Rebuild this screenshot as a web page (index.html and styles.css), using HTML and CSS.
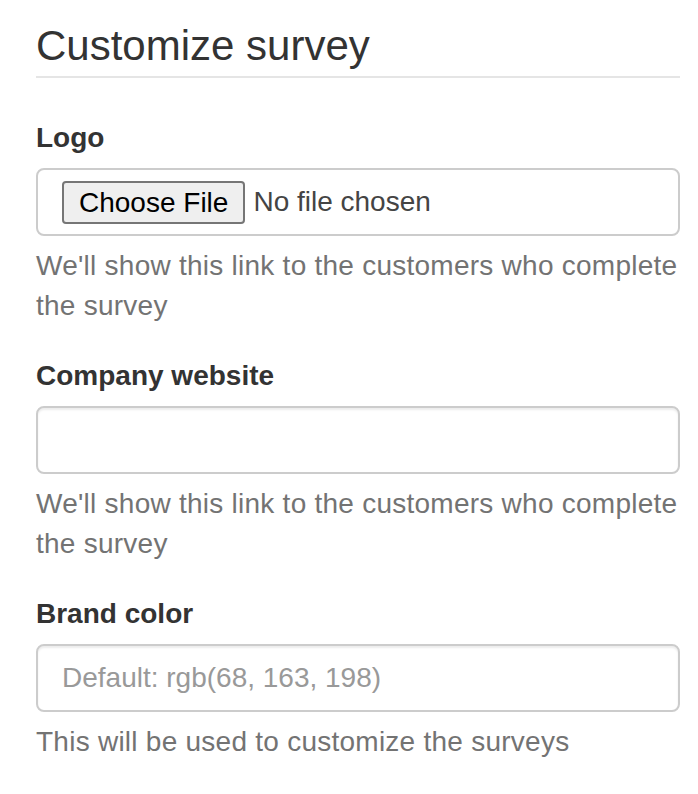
FILE: index.html
```html
<!DOCTYPE html>
<html lang="en">
<head>
<meta charset="utf-8">
<title>Customize survey</title>
<link rel="stylesheet" href="styles.css">
</head>
<body>
<form class="page">
  <fieldset class="fieldset">
    <legend class="legend">Customize survey</legend>
    <div class="form-group">
      <label class="label">Logo</label>
      <div class="form-control file-control">
        <span class="file-button">Choose File</span>
        <span class="file-name">No file chosen</span>
      </div>
      <p class="help-block">We'll show this link to the customers who complete the survey</p>
    </div>
    <div class="form-group">
      <label class="label" for="website">Company website</label>
      <input class="form-control" id="website" type="text">
      <p class="help-block">We'll show this link to the customers who complete the survey</p>
    </div>
    <div class="form-group">
      <label class="label" for="color">Brand color</label>
      <input class="form-control" id="color" type="text" placeholder="Default: rgb(68, 163, 198)">
      <p class="help-block">This will be used to customize the surveys</p>
    </div>
  </fieldset>
</form>
</body>
</html>
```
FILE: styles.css
```css
html, body {
  margin: 0;
  padding: 0;
  background: #fff;
}
body {
  font-family: "Liberation Sans", Arial, Helvetica, sans-serif;
  font-size: 28px;
  line-height: 40px;
  color: #333;
}
.page {
  padding: 16px 18px 0 36px;
  margin: 0;
}
.fieldset {
  border: 0;
  margin: 0;
  padding: 0;
  min-width: 0;
}
.legend {
  display: block;
  width: 100%;
  padding: 0;
  margin: 0 0 40px 0;
  font-size: 42px;
  line-height: 60px;
  font-weight: 400;
  color: #333;
  border-bottom: 2px solid #e5e5e5;
}
.form-group {
  margin-bottom: 30px;
}
.label {
  display: block;
  max-width: 100%;
  margin-bottom: 10px;
  font-weight: 700;
}
.form-control {
  display: block;
  box-sizing: border-box;
  width: 100%;
  height: 68px;
  margin: 0;
  padding: 12px 24px;
  font-family: inherit;
  font-size: 28px;
  line-height: 40px;
  color: #555;
  background: #fff;
  border: 2px solid #ccc;
  border-radius: 8px;
  box-shadow: inset 0 2px 2px rgba(0, 0, 0, 0.075);
  outline: none;
}
.form-control::placeholder {
  color: #999;
  opacity: 1;
}
.file-control {
  display: flex;
  align-items: center;
  padding-top: 0;
  padding-bottom: 0;
  box-shadow: none;
}
.file-button {
  box-sizing: border-box;
  height: 43px;
  padding: 0 15px;
  margin: 1px 8px 0 0;
  font-size: 28px;
  line-height: 39px;
  color: #000;
  background: #efefef;
  border: 2px solid #767676;
  border-radius: 4px;
}
.file-name {
  color: #444;
  white-space: nowrap;
}
.help-block {
  display: block;
  margin: 10px 0 20px 0;
  color: #737373;
  letter-spacing: 0.25px;
}
```
